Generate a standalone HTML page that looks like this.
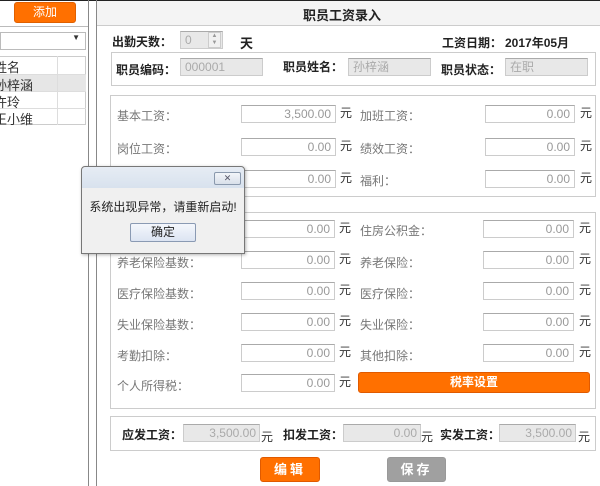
<!DOCTYPE html><html><head><meta charset="utf-8"><style>
*{margin:0;padding:0;box-sizing:border-box}
body{width:600px;height:486px;overflow:hidden;background:#fff;font-family:"Liberation Sans","Noto Sans CJK SC",sans-serif;font-size:12px;color:#333;position:relative}
.a{position:absolute;white-space:nowrap}
.lb{color:#777}
.bl{font-weight:bold;color:#222}
.in{position:absolute;height:18px;border:1px solid #ccc;border-top-color:#aaa;background:#fff;text-align:right;padding-right:4px;line-height:16px;color:#999;font-size:12px}
.dis{background:#e8e8e8;color:#aaa;text-align:left;padding-left:4px}
.box{position:absolute;border:1px solid #ccc}
.y{position:absolute;font-size:12px;color:#333}
</style></head><body>
<div class="a" style="left:0;top:0;width:600px;height:1px;background:#222"></div>
<!-- left -->
<div class="a" style="left:0;top:26px;width:88px;height:1px;background:#bbb"></div>
<div class="a" style="left:14px;top:2px;width:62px;height:21px;background:#ff7000;border:1px solid #e06000;border-radius:3px;color:#fff;text-align:center;line-height:19px;font-size:12px">添加</div>
<div class="a" style="left:0;top:32px;width:86px;height:18px;border:1px solid #bbb;background:#fff"><span style="position:absolute;right:5px;top:0;font-size:8px;color:#333">▼</span></div>
<div class="a" style="left:0;top:56px;width:86px;height:69px;border:1px solid #ccc;border-left:none"></div>
<div class="a" style="left:0;top:74px;width:86px;height:17px;background:#e6e6e6"></div>
<div class="a" style="left:0;top:74px;width:86px;height:1px;background:#ddd"></div>
<div class="a" style="left:0;top:91px;width:86px;height:1px;background:#ddd"></div>
<div class="a" style="left:0;top:108px;width:86px;height:1px;background:#ddd"></div>
<div class="a" style="left:57px;top:56px;width:1px;height:69px;background:#ddd"></div>
<div class="a" style="left:-6px;top:57px;font-size:13px;color:#333">姓名</div>
<div class="a" style="left:-6px;top:75px;font-size:13px">孙梓涵</div>
<div class="a" style="left:-6px;top:92px;font-size:13px">许玲</div>
<div class="a" style="left:-6px;top:109px;font-size:13px">王小维</div>
<div class="a" style="left:88px;top:0;width:1px;height:486px;background:#888"></div>
<div class="a" style="left:96px;top:0;width:1px;height:486px;background:#888"></div>
<!-- title -->
<div class="a" style="left:97px;top:1px;width:503px;height:25px;background:#f4f4f4;border-bottom:1px solid #ccc"></div>
<div class="a bl" style="left:303px;top:5px;font-size:13px">职员工资录入</div>
<div class="a bl" style="left:112px;top:33px">出勤天数：</div>
<div class="in dis" style="left:180px;top:31px;width:43px">0</div>
<div class="a" style="left:208px;top:32px;width:13px;height:16px;border:1px solid #ccc;background:#f0f0f0;font-size:6px;color:#999;text-align:center;line-height:7px">▲<br>▼</div>
<div class="a bl" style="left:240px;top:33px;font-size:13px">天</div>
<div class="a bl" style="left:442px;top:34px">工资日期：</div>
<div class="a bl" style="left:505px;top:34px">2017年05月</div>
<div class="box" style="left:111px;top:52px;width:485px;height:34px"></div>
<div class="a bl" style="left:116px;top:61px">职员编码：</div>
<div class="in dis" style="left:180px;top:58px;width:83px">000001</div>
<div class="a bl" style="left:283px;top:58px">职员姓名：</div>
<div class="in dis" style="left:348px;top:58px;width:83px">孙梓涵</div>
<div class="a bl" style="left:441px;top:61px">职员状态：</div>
<div class="in dis" style="left:505px;top:58px;width:83px">在职</div>
<!-- box2 -->
<div class="box" style="left:110px;top:95px;width:486px;height:102px"></div>
<div class="a lb" style="left:117px;top:107px">基本工资：</div>
<div class="in" style="left:241px;top:105px;width:95px">3,500.00</div><div class="y" style="left:340px;top:104px">元</div>
<div class="a lb" style="left:360px;top:107px">加班工资：</div>
<div class="in" style="left:485px;top:105px;width:90px">0.00</div><div class="y" style="left:580px;top:104px">元</div>
<div class="a lb" style="left:117px;top:140px">岗位工资：</div>
<div class="in" style="left:241px;top:138px;width:95px">0.00</div><div class="y" style="left:340px;top:137px">元</div>
<div class="a lb" style="left:360px;top:140px">绩效工资：</div>
<div class="in" style="left:485px;top:138px;width:90px">0.00</div><div class="y" style="left:580px;top:137px">元</div>
<div class="in" style="left:241px;top:170px;width:95px">0.00</div><div class="y" style="left:340px;top:169px">元</div>
<div class="a lb" style="left:360px;top:172px">福利：</div>
<div class="in" style="left:485px;top:170px;width:90px">0.00</div><div class="y" style="left:580px;top:169px">元</div>
<!-- box3 -->
<div class="box" style="left:110px;top:212px;width:486px;height:197px"></div>
<div class="in" style="left:241px;top:220px;width:94px">0.00</div><div class="y" style="left:339px;top:219px">元</div>
<div class="a lb" style="left:360px;top:222px">住房公积金：</div>
<div class="in" style="left:483px;top:220px;width:91px">0.00</div><div class="y" style="left:579px;top:219px">元</div>
<div class="a lb" style="left:117px;top:254px">养老保险基数：</div>
<div class="in" style="left:241px;top:251px;width:94px">0.00</div><div class="y" style="left:339px;top:250px">元</div>
<div class="a lb" style="left:360px;top:254px">养老保险：</div>
<div class="in" style="left:483px;top:251px;width:91px">0.00</div><div class="y" style="left:579px;top:250px">元</div>
<div class="a lb" style="left:117px;top:285px">医疗保险基数：</div>
<div class="in" style="left:241px;top:282px;width:94px">0.00</div><div class="y" style="left:339px;top:281px">元</div>
<div class="a lb" style="left:360px;top:285px">医疗保险：</div>
<div class="in" style="left:483px;top:282px;width:91px">0.00</div><div class="y" style="left:579px;top:281px">元</div>
<div class="a lb" style="left:117px;top:316px">失业保险基数：</div>
<div class="in" style="left:241px;top:313px;width:94px">0.00</div><div class="y" style="left:339px;top:312px">元</div>
<div class="a lb" style="left:360px;top:316px">失业保险：</div>
<div class="in" style="left:483px;top:313px;width:91px">0.00</div><div class="y" style="left:579px;top:312px">元</div>
<div class="a lb" style="left:117px;top:347px">考勤扣除：</div>
<div class="in" style="left:241px;top:344px;width:94px">0.00</div><div class="y" style="left:339px;top:343px">元</div>
<div class="a lb" style="left:360px;top:347px">其他扣除：</div>
<div class="in" style="left:483px;top:344px;width:91px">0.00</div><div class="y" style="left:579px;top:343px">元</div>
<div class="a lb" style="left:117px;top:377px">个人所得税：</div>
<div class="in" style="left:241px;top:374px;width:94px">0.00</div><div class="y" style="left:339px;top:373px">元</div>
<div class="a" style="left:358px;top:372px;width:232px;height:21px;background:#ff7000;border:1px solid #e05a00;border-radius:3px;color:#fff;font-weight:bold;text-align:center;line-height:19px">税率设置</div>
<!-- box4 -->
<div class="box" style="left:110px;top:416px;width:486px;height:35px"></div>
<div class="a bl" style="left:122px;top:426px">应发工资：</div>
<div class="in dis" style="left:183px;top:424px;width:77px;text-align:right;padding-right:3px">3,500.00</div><div class="y" style="left:261px;top:428px">元</div>
<div class="a bl" style="left:283px;top:426px">扣发工资：</div>
<div class="in dis" style="left:343px;top:424px;width:78px;text-align:right;padding-right:3px">0.00</div><div class="y" style="left:421px;top:428px">元</div>
<div class="a bl" style="left:440px;top:426px">实发工资：</div>
<div class="in dis" style="left:499px;top:424px;width:77px;text-align:right;padding-right:3px">3,500.00</div><div class="y" style="left:578px;top:428px">元</div>
<div class="a" style="left:260px;top:457px;width:60px;height:25px;background:#ff7000;border:1px solid #e05a00;border-radius:3px;color:#fff;font-weight:bold;text-align:center;line-height:23px;font-size:13px;letter-spacing:3px">编辑</div>
<div class="a" style="left:387px;top:457px;width:59px;height:25px;background:#a0a0a0;border:1px solid #999;border-radius:3px;color:#fff;font-weight:bold;text-align:center;line-height:23px;font-size:13px;letter-spacing:3px">保存</div>
<!-- dialog -->
<div class="a" style="left:81px;top:166px;width:164px;height:88px;border:1px solid #777;border-radius:4px 4px 0 0;background:#f0f0f0;box-shadow:1px 1px 3px rgba(0,0,0,.3)">
<div style="height:21px;background:linear-gradient(#e6ecf4,#d8e2ee);border-radius:4px 4px 0 0"></div>
<div style="position:absolute;left:132px;top:5px;width:27px;height:13px;border:1px solid #8a99ad;border-radius:2px;background:linear-gradient(#f2f5f9,#d9e0ea);font-size:9px;color:#556;text-align:center;line-height:11px">✕</div>
<div style="position:absolute;left:0;width:162px;top:31px;text-align:center;font-size:12px;color:#222">系统出现异常，请重新启动!</div>
<div style="position:absolute;left:48px;top:56px;width:66px;height:19px;border:1px solid #8a9ab3;border-radius:2px;background:linear-gradient(#f4f7fc,#dce4f2);text-align:center;line-height:17px;color:#222">确定</div>
</div>
</body></html>
